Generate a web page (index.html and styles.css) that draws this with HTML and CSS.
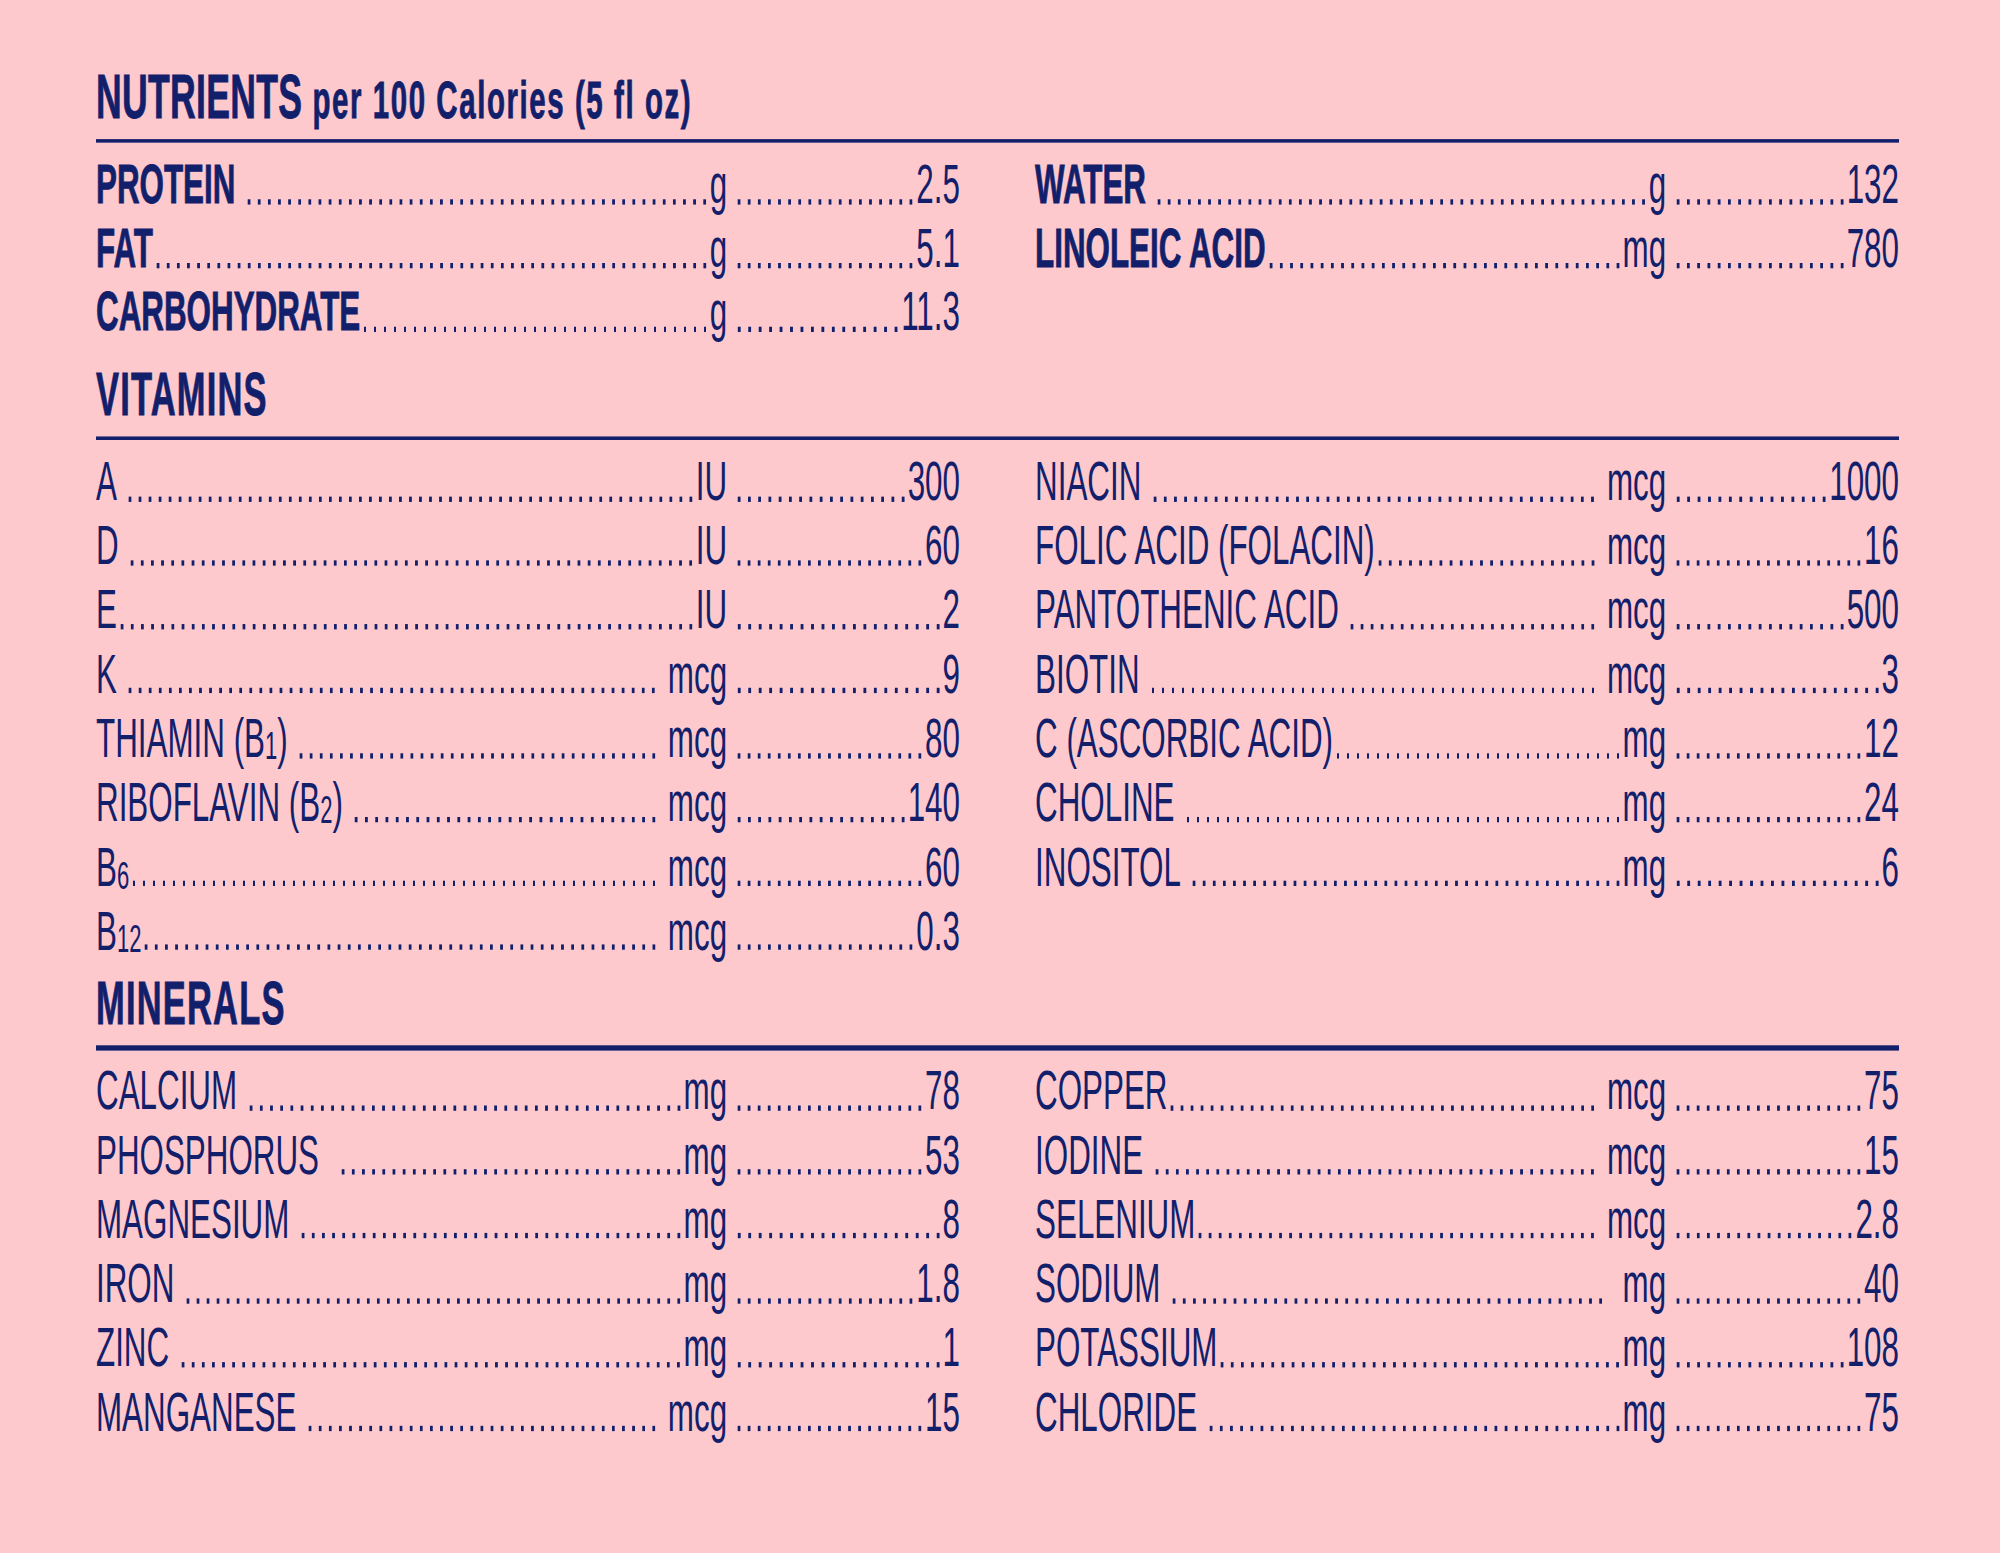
FILE: index.html
```html
<!DOCTYPE html>
<html lang="en">
<head>
<meta charset="utf-8">
<title>Nutrients per 100 Calories</title>
<link rel="stylesheet" href="styles.css">
</head>
<body>
<main class="sheet">
  <h1 class="heading title">NUTRIENTS <span class="sub">per 100 Calories (5 fl oz)</span></h1>
  <div class="rule"></div>
  <section class="cols">
    <div class="col">
      <div class="row b"><div class="lead"><span class="name">PROTEIN</span><span class="dl sl"></span><span class="unit">g</span></div><div class="val"><span class="dv"></span><span class="num">2.5</span></div></div>
      <div class="row b"><div class="lead"><span class="name">FAT</span><span class="dl"></span><span class="unit">g</span></div><div class="val"><span class="dv"></span><span class="num">5.1</span></div></div>
      <div class="row b"><div class="lead"><span class="name">CARBOHYDRATE</span><span class="dl"></span><span class="unit">g</span></div><div class="val"><span class="dv"></span><span class="num">11.3</span></div></div>
    </div>
    <div class="col">
      <div class="row b"><div class="lead"><span class="name">WATER</span><span class="dl sl"></span><span class="unit">g</span></div><div class="val"><span class="dv"></span><span class="num">132</span></div></div>
      <div class="row b"><div class="lead"><span class="name">LINOLEIC ACID</span><span class="dl"></span><span class="unit">mg</span></div><div class="val"><span class="dv"></span><span class="num">780</span></div></div>
    </div>
  </section>

  <h2 class="heading vit">VITAMINS</h2>
  <div class="rule"></div>
  <section class="cols">
    <div class="col">
      <div class="row"><div class="lead"><span class="name">A</span><span class="dl sl"></span><span class="unit">IU</span></div><div class="val"><span class="dv"></span><span class="num">300</span></div></div>
      <div class="row"><div class="lead"><span class="name">D</span><span class="dl sl"></span><span class="unit">IU</span></div><div class="val"><span class="dv"></span><span class="num">60</span></div></div>
      <div class="row"><div class="lead"><span class="name">E</span><span class="dl"></span><span class="unit">IU</span></div><div class="val"><span class="dv"></span><span class="num">2</span></div></div>
      <div class="row"><div class="lead"><span class="name">K</span><span class="dl sl sr"></span><span class="unit">mcg</span></div><div class="val"><span class="dv"></span><span class="num">9</span></div></div>
      <div class="row"><div class="lead"><span class="name">THIAMIN (B<sub class="ix">1</sub>)</span><span class="dl sl sr"></span><span class="unit">mcg</span></div><div class="val"><span class="dv"></span><span class="num">80</span></div></div>
      <div class="row"><div class="lead"><span class="name">RIBOFLAVIN (B<sub class="ix">2</sub>)</span><span class="dl sl sr"></span><span class="unit">mcg</span></div><div class="val"><span class="dv"></span><span class="num">140</span></div></div>
      <div class="row"><div class="lead"><span class="name">B<sub class="ix">6</sub></span><span class="dl sr"></span><span class="unit">mcg</span></div><div class="val"><span class="dv"></span><span class="num">60</span></div></div>
      <div class="row"><div class="lead"><span class="name">B<sub class="ix">12</sub></span><span class="dl sr"></span><span class="unit">mcg</span></div><div class="val"><span class="dv"></span><span class="num">0.3</span></div></div>
    </div>
    <div class="col">
      <div class="row"><div class="lead"><span class="name">NIACIN</span><span class="dl sl sr"></span><span class="unit">mcg</span></div><div class="val"><span class="dv"></span><span class="num">1000</span></div></div>
      <div class="row"><div class="lead"><span class="name">FOLIC ACID (FOLACIN)</span><span class="dl sr"></span><span class="unit">mcg</span></div><div class="val"><span class="dv"></span><span class="num">16</span></div></div>
      <div class="row"><div class="lead"><span class="name">PANTOTHENIC ACID</span><span class="dl sl sr"></span><span class="unit">mcg</span></div><div class="val"><span class="dv"></span><span class="num">500</span></div></div>
      <div class="row"><div class="lead"><span class="name">BIOTIN</span><span class="dl sl sr"></span><span class="unit">mcg</span></div><div class="val"><span class="dv"></span><span class="num">3</span></div></div>
      <div class="row"><div class="lead"><span class="name">C (ASCORBIC ACID)</span><span class="dl"></span><span class="unit">mg</span></div><div class="val"><span class="dv"></span><span class="num">12</span></div></div>
      <div class="row"><div class="lead"><span class="name">CHOLINE</span><span class="dl sl"></span><span class="unit">mg</span></div><div class="val"><span class="dv"></span><span class="num">24</span></div></div>
      <div class="row"><div class="lead"><span class="name">INOSITOL</span><span class="dl sl"></span><span class="unit">mg</span></div><div class="val"><span class="dv"></span><span class="num">6</span></div></div>
    </div>
  </section>

  <h2 class="heading min">MINERALS</h2>
  <div class="rule"></div>
  <section class="cols">
    <div class="col">
      <div class="row"><div class="lead"><span class="name">CALCIUM</span><span class="dl sl"></span><span class="unit">mg</span></div><div class="val"><span class="dv"></span><span class="num">78</span></div></div>
      <div class="row"><div class="lead"><span class="name">PHOSPHORUS</span><span class="dl sl2"></span><span class="unit">mg</span></div><div class="val"><span class="dv"></span><span class="num">53</span></div></div>
      <div class="row"><div class="lead"><span class="name">MAGNESIUM</span><span class="dl sl"></span><span class="unit">mg</span></div><div class="val"><span class="dv"></span><span class="num">8</span></div></div>
      <div class="row"><div class="lead"><span class="name">IRON</span><span class="dl sl"></span><span class="unit">mg</span></div><div class="val"><span class="dv"></span><span class="num">1.8</span></div></div>
      <div class="row"><div class="lead"><span class="name">ZINC</span><span class="dl sl"></span><span class="unit">mg</span></div><div class="val"><span class="dv"></span><span class="num">1</span></div></div>
      <div class="row"><div class="lead"><span class="name">MANGANESE</span><span class="dl sl sr"></span><span class="unit">mcg</span></div><div class="val"><span class="dv"></span><span class="num">15</span></div></div>
    </div>
    <div class="col">
      <div class="row"><div class="lead"><span class="name">COPPER</span><span class="dl sr"></span><span class="unit">mcg</span></div><div class="val"><span class="dv"></span><span class="num">75</span></div></div>
      <div class="row"><div class="lead"><span class="name">IODINE</span><span class="dl sl sr"></span><span class="unit">mcg</span></div><div class="val"><span class="dv"></span><span class="num">15</span></div></div>
      <div class="row"><div class="lead"><span class="name">SELENIUM</span><span class="dl sr"></span><span class="unit">mcg</span></div><div class="val"><span class="dv"></span><span class="num">2.8</span></div></div>
      <div class="row"><div class="lead"><span class="name">SODIUM</span><span class="dl sl sr2"></span><span class="unit">mg</span></div><div class="val"><span class="dv"></span><span class="num">40</span></div></div>
      <div class="row"><div class="lead"><span class="name">POTASSIUM</span><span class="dl"></span><span class="unit">mg</span></div><div class="val"><span class="dv"></span><span class="num">108</span></div></div>
      <div class="row"><div class="lead"><span class="name">CHLORIDE</span><span class="dl sl"></span><span class="unit">mg</span></div><div class="val"><span class="dv"></span><span class="num">75</span></div></div>
    </div>
  </section>
</main>
</body>
</html>
```

FILE: styles.css
```css
html, body {
  margin: 0;
  padding: 0;
  background: #fdc9cc;
  overflow: hidden;
}

body {
  width: 2000px;
  height: 1553px;
  font-family: "Liberation Sans", Arial, sans-serif;
  color: #12206c;
}

/* The label is set in a tall condensed face: lay the text out small,
   then stretch it vertically so the glyphs get condensed proportions. */
.sheet {
  width: 1803px;
  margin: 63px 0 0 96px;
  transform: scaleY(1.7699);
  transform-origin: 0 0;
}

.heading {
  margin: 0;
  font-size: 34.47px;
  font-weight: 700;
  line-height: 39.55px;
  letter-spacing: 1.2px;
  white-space: nowrap;
  -webkit-text-stroke: 0.5px currentColor;
}

.title {
  font-size: 35.6px;
  letter-spacing: 0.3px;
}

.sub {
  font-size: 29.4px;
  line-height: 29.4px;
  letter-spacing: 1.6px;
}

.vit {
  margin-top: 8.5px;
}

.min {
  margin-top: 3.39px;
}

.rule {
  height: 2.26px;
  margin-top: 3.39px;
  background: currentColor;
}

.cols {
  display: grid;
  grid-template-columns: 1fr 1fr;
  column-gap: 75.1px;
  margin-top: 5.65px;
}

.row {
  display: grid;
  grid-template-columns: 631.1px 1fr;
  height: 36.27px;
  font-size: 31.36px;
  line-height: 36.27px;
  white-space: nowrap;
}

.lead,
.val {
  display: flex;
  min-width: 0;
}

.name,
.unit,
.num {
  flex: none;
}

.b .name {
  font-weight: 700;
  -webkit-text-stroke: 0.5px currentColor;
}

/* dot leaders: whole dots only, spread evenly between the texts */
.dl,
.dv {
  flex: 1 1 0;
  min-width: 0;
  background-image: linear-gradient(to right, transparent 3.6px, currentColor 3.6px, currentColor 6.4px, transparent 6.4px);
  background-size: 10px 3.3px;
  background-repeat: space no-repeat;
  background-position: 0 25.7px;
}

.sl { margin-left: 8.5px; }
.sl2 { margin-left: 19.2px; }
.sr { margin-right: 8.5px; }
.sr2 { margin-right: 17px; }

.val {
  padding-left: 7px;
}

.ix {
  font-size: 22px;
  line-height: 0;
  vertical-align: -1.5px;
}
```
